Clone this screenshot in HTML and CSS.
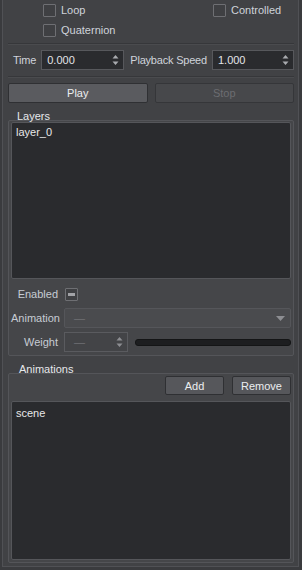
FILE: index.html
```html
<!DOCTYPE html>
<html lang="en">
<head>
    <meta charset="UTF-8">
    <title>Animation Panel</title>
    <link rel="stylesheet" href="styles.css">
</head>
<body>
    <div class="panel">

        <!-- options -->
        <div class="opts">
            <label class="check"><span class="box"></span>Loop</label>
            <label class="check"><span class="box"></span>Controlled</label>
            <label class="check"><span class="box"></span>Quaternion</label>
        </div>

        <div class="sep"></div>

        <div class="time-row">
            <span class="lbl">Time</span>
            <div class="spin spin-time">
                <span class="val">0.000</span>
                <svg class="arrows" width="7" height="12" viewBox="0 0 7 12"><path d="M3.5 1 L6.5 4.5 L0.5 4.5 Z M0.5 7.5 L6.5 7.5 L3.5 11 Z" fill="#a9abaf"/></svg>
            </div>
            <span class="lbl">Playback Speed</span>
            <div class="spin spin-speed">
                <span class="val">1.000</span>
                <svg class="arrows" width="7" height="12" viewBox="0 0 7 12"><path d="M3.5 1 L6.5 4.5 L0.5 4.5 Z M0.5 7.5 L6.5 7.5 L3.5 11 Z" fill="#a9abaf"/></svg>
            </div>
        </div>

        <div class="sep sep-2"></div>

        <div class="btn-row">
            <button class="btn">Play</button>
            <button class="btn" disabled>Stop</button>
        </div>

        <!-- layers -->
        <div class="group-title">Layers</div>
        <div class="group">
            <div class="list list-layers">
                <div class="item">layer_0</div>
            </div>
            <div class="form-row row-enabled">
                <span class="form-lbl">Enabled</span>
                <span class="box box-partial"></span>
            </div>
            <div class="form-row">
                <span class="form-lbl">Animation</span>
                <div class="combo">
                    <span class="dash">—</span>
                    <svg width="9" height="5" viewBox="0 0 9 5"><path d="M0 0 L9 0 L4.5 5 Z" fill="#8d8e92"/></svg>
                </div>
            </div>
            <div class="form-row">
                <span class="form-lbl">Weight</span>
                <div class="spin spin-weight">
                    <span class="dash">—</span>
                    <svg class="arrows" width="7" height="12" viewBox="0 0 7 12"><path d="M3.5 1 L6.5 4.5 L0.5 4.5 Z M0.5 7.5 L6.5 7.5 L3.5 11 Z" fill="#8d8e92"/></svg>
                </div>
                <div class="groove"></div>
            </div>
        </div>

        <!-- animations -->
        <div class="group-title title-anims">Animations</div>
        <div class="group group-anims">
            <div class="anim-btns">
                <button class="btn btn-small">Add</button>
                <button class="btn btn-small">Remove</button>
            </div>
            <div class="list list-anims">
                <div class="item">scene</div>
            </div>
        </div>

    </div>
</body>
</html>
```

FILE: styles.css
```css
body {
    margin: 0;
    height: 570px;
    background-color: #3a3b3e;
    font-family: "Liberation Sans", Arial, sans-serif;
    font-size: 11px;
    color: #cfd3da;
    overflow: hidden;
}

.panel {
    margin: 0 3px 0 2px;
    padding: 0 4px 3px 5px;
    background-color: #414245;
    border: 1px solid #505155;
    border-top: none;
}

/* options */
.opts {
    display: grid;
    grid-template-columns: 170px auto;
    padding-left: 35px;
}

.check {
    display: flex;
    align-items: center;
    height: 20px;
}

.box {
    display: inline-block;
    width: 11px;
    height: 11px;
    margin-right: 5px;
    border: 1px solid #6e6f73;
    border-radius: 1px;
    background-color: #3f4043;
}

.box-partial {
    position: relative;
    margin-left: 1px;
}

.box-partial::after {
    content: "";
    position: absolute;
    left: 2px;
    right: 2px;
    top: 4px;
    height: 3px;
    background-color: #a2a3a7;
}

.sep {
    margin-top: 3px;
    height: 0;
    border-top: 1px solid #36373a;
    border-bottom: 1px solid #4a4b4e;
}

.sep-2 {
    margin-top: 6px;
}

/* time row */
.time-row {
    display: flex;
    align-items: center;
    margin-top: 5px;
    height: 20px;
    padding-left: 5px;
    white-space: nowrap;
}

.lbl {
    flex-shrink: 0;
    margin-right: 5px;
    letter-spacing: -0.2px;
}

.spin {
    box-sizing: border-box;
    display: flex;
    align-items: center;
    flex-shrink: 0;
    height: 20px;
    padding: 0 4px 0 5px;
    background-color: #2a2b2e;
    border: 1px solid #57585c;
    color: #e2e4e8;
}

.spin .val, .spin .dash {
    flex: 1;
}

.spin-time {
    width: 83px;
    margin-right: 6px;
}

.spin-speed {
    flex: 1;
    flex-shrink: 1;
    min-width: 0;
}

/* buttons */
.btn-row {
    display: flex;
    gap: 7px;
    margin-top: 5px;
}

.btn {
    box-sizing: border-box;
    height: 20px;
    padding: 0;
    font-family: inherit;
    font-size: 11px;
    color: #eceef0;
    background-color: #5a5b5f;
    border: 1px solid #2f3033;
    border-radius: 2px;
}

.btn-row .btn {
    flex: 1;
}

.btn:disabled {
    color: #6c6d71;
    background-color: #47484b;
    border-color: #353639;
}

/* group boxes */
.group-title {
    margin-top: 7px;
    padding-left: 9px;
    line-height: 13px;
    color: #e6e8eb;
}

.title-anims {
    padding-left: 11px;
}

.group {
    margin-top: -3px;
    padding: 1px 2px 3px 2px;
    background-color: #454649;
    border: 1px solid #545559;
    border-radius: 2px;
}

.list {
    box-sizing: border-box;
    background-color: #2a2b2e;
    border: 1px solid #55565a;
    border-radius: 2px;
    padding: 3px 4px;
    color: #e8e8e8;
}

.list-layers {
    height: 157px;
}

.item {
    line-height: 13px;
}

.form-row {
    display: flex;
    align-items: center;
    height: 20px;
    margin-top: 4px;
}

.row-enabled {
    margin-top: 5px;
}

.form-lbl {
    width: 47px;
    margin-right: 6px;
    text-align: right;
    color: #c7ccd4;
}

.box-partial {
    width: 11px;
    height: 11px;
}

.combo {
    box-sizing: border-box;
    flex: 1;
    display: flex;
    align-items: center;
    height: 20px;
    padding: 0 5px 0 9px;
    background-color: #4a4b4e;
    border: 1px solid #55565a;
    border-radius: 2px;
    color: #6f7074;
}

.combo .dash {
    flex: 1;
}

.spin-weight {
    width: 64px;
    padding-left: 9px;
    background-color: #434447;
    border-color: #5a5b5f;
    color: #6f7074;
}

.groove {
    flex: 1;
    height: 5px;
    margin-left: 7px;
    background-color: #1d1e20;
    border: 1px solid #141516;
    border-radius: 3px;
}

/* animations */
.group-anims {
    padding-top: 2px;
    padding-bottom: 2px;
}

.anim-btns {
    display: flex;
    justify-content: flex-end;
    gap: 8px;
}

.btn-small {
    width: 59px;
    height: 19px;
    background-color: #56575b;
}

.list-anims {
    height: 159px;
    margin-top: 6px;
    padding-top: 5px;
}
```
